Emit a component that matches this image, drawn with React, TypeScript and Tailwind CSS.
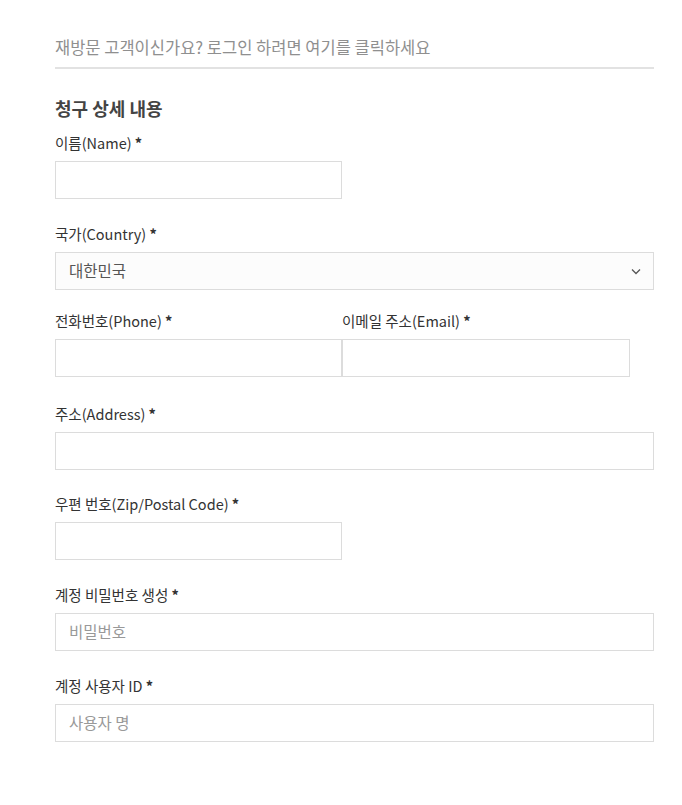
import React from "react";

const font = { fontFamily: '"Noto Sans CJK KR", "Noto Sans", sans-serif' };

function Label({ children, className = "" }: { children: React.ReactNode; className?: string }) {
  return (
    <div className={`text-[14.5px] leading-[20px] text-[#333] ${className}`}>
      {children} <span className="font-bold text-[#333]">*</span>
    </div>
  );
}

function Input({ placeholder, className = "" }: { placeholder?: string; className?: string }) {
  return (
    <div
      className={`h-[38px] border border-[#dcdcdc] bg-white flex items-center pl-[13px] text-[15.5px] text-[#999] ${className}`}
    >
      {placeholder}
    </div>
  );
}

export default function App() {
  return (
    <div className="w-[682px] h-[805px] bg-white" style={font}>
      <div className="ml-[55px] w-[599px] pt-[35px]">
        <div className="pb-[8px] border-b-2 border-[#e2e2e2] text-[16.5px] leading-[24px] text-[#8f8f8f]">
          재방문 고객이신가요? 로그인 하려면 여기를 클릭하세요
        </div>

        <div className="mt-[26px] text-[18px] leading-[26px] font-semibold text-[#444]">청구 상세 내용</div>

        <Label className="mt-[12px]">이름(Name)</Label>
        <Input className="mt-[8px] w-[287px]" />

        <Label className="mt-[25px]">국가(Country)</Label>
        <div className="mt-[8px] h-[38px] border border-[#dcdcdc] bg-[#fcfcfc] flex items-center justify-between pl-[13px] pr-[12px] text-[15.5px] text-[#555]">
          <span>대한민국</span>
          <svg width="10" height="7" viewBox="0 0 10 7" fill="none">
            <path d="M1 1.5 L5 5.5 L9 1.5" stroke="#555" strokeWidth="1.3" />
          </svg>
        </div>

        <div className="mt-[21px] flex">
          <div className="w-[287px]">
            <Label>전화번호(Phone)</Label>
            <Input className="mt-[8px]" />
          </div>
          <div className="w-[288px]">
            <Label>이메일 주소(Email)</Label>
            <Input className="mt-[8px]" />
          </div>
        </div>

        <Label className="mt-[27px]">주소(Address)</Label>
        <Input className="mt-[8px]" />

        <Label className="mt-[24px]">우편 번호(Zip/Postal Code)</Label>
        <Input className="mt-[8px] w-[287px]" />

        <Label className="mt-[25px]">계정 비밀번호 생성</Label>
        <Input className="mt-[8px]" placeholder="비밀번호" />

        <Label className="mt-[25px]">계정 사용자 ID</Label>
        <Input className="mt-[8px]" placeholder="사용자 명" />
      </div>
    </div>
  );
}
